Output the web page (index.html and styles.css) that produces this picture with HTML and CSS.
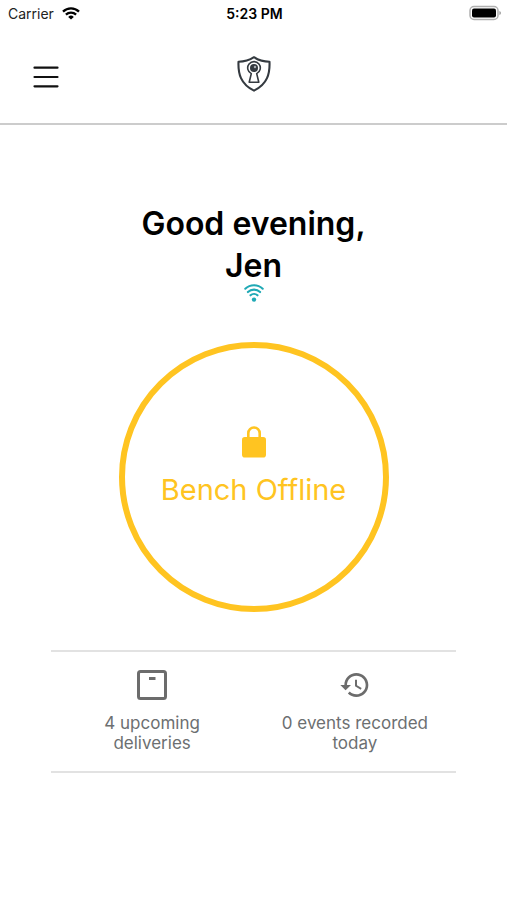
FILE: index.html
```html
<!DOCTYPE html>
<html lang="en">
<head>
<meta charset="utf-8">
<meta name="viewport" content="width=device-width, initial-scale=1">
<title>Home</title>
<link rel="stylesheet" href="styles.css">
</head>
<body>
<div class="status-bar">
  <div class="carrier">
    <span>Carrier</span>
    <svg width="18" height="13" viewBox="0 0 18 13" fill="none" stroke="#000" stroke-width="2.3" aria-hidden="true">
      <path d="M1 4.6a11.5 11.5 0 0 1 16 0"/>
      <path d="M3.900 7.600a7.400 7.400 0 0 1 10.200 0"/>
      <path d="M6.200 9.900a4 4 0 0 1 5.600 0L9 12.600z" fill="#000" stroke="none"/>
    </svg>
  </div>
  <div class="time">5:23 PM</div>
  <div class="battery">
    <svg width="32" height="16" viewBox="0 0 32 16" aria-hidden="true">
      <rect x="1" y="1.500" width="28" height="13" rx="4" fill="#fff" stroke="#b0b0b0" stroke-width="1.500"/>
      <rect x="3" y="3.500" width="24" height="9" rx="2" fill="#000"/>
      <path d="M30.500 6v4q1.300-.6 1.300-2t-1.300-2z" fill="#888"/>
    </svg>
  </div>
</div>

<header class="header">
  <button class="menu" type="button" aria-label="Menu">
    <svg width="26" height="22" viewBox="0 0 26 22" stroke="#111" stroke-width="2.200" stroke-linecap="round" aria-hidden="true">
      <path d="M1.500 1.700h23M1.500 11h23M1.500 20.300h23"/>
    </svg>
  </button>
  <svg class="logo" width="34" height="36" viewBox="0 0 34 36" fill="none" stroke="#343a40" aria-hidden="true">
    <path d="M17 1.200C12.500 4.200 7 5.700 1.500 5.700C1 17.500 3.500 28 17 34.600C30.500 28 33 17.500 32.500 5.700C27 5.700 21.500 4.200 17 1.200z" stroke-width="2.100" stroke-linejoin="round"/>
    <path d="M14.300 17.600A6.300 6.300 0 1 1 19.700 17.600L21.800 26.200H12.200z" stroke-width="1.600" stroke-linejoin="round"/>
    <circle cx="17" cy="12" r="4" fill="#343a40" stroke="none"/>
    <circle cx="18" cy="11" r="1.200" fill="#a9adb2" stroke="none"/>
  </svg>
</header>

<main class="main">
  <h1 class="greeting">Good evening,<br>Jen</h1>
  <svg class="signal" width="20" height="18" viewBox="0 0 20 18" fill="none" stroke="#20a9b5" stroke-width="2.100" stroke-linecap="round" aria-hidden="true">
    <path d="M1.300 4.700a12.500 12.500 0 0 1 17.400 0"/>
    <path d="M3.900 8.100a8.800 8.800 0 0 1 12.200 0"/>
    <path d="M6.500 11.300a5.200 5.200 0 0 1 7 0"/>
    <circle cx="10" cy="15.600" r="2.200" fill="#20a9b5" stroke="none"/>
  </svg>

  <button class="bench" type="button">
    <svg width="24" height="32" viewBox="0 0 24 32" aria-hidden="true">
      <path d="M6.300 13V7.200a5.700 5.700 0 0 1 11.400 0V13" fill="none" stroke="#ffc421" stroke-width="2.600"/>
      <rect x="0" y="11" width="24" height="20.500" rx="2.800" fill="#ffc421"/>
    </svg>
    <span>Bench Offline</span>
  </button>

  <section class="stats">
    <div class="stat">
      <svg width="32" height="32" viewBox="0 0 32 32" aria-hidden="true">
        <rect x="2.500" y="2.500" width="27" height="27" rx="2" fill="none" stroke="#6c6c6c" stroke-width="3"/>
        <rect x="13" y="8" width="6.500" height="3" fill="#6c6c6c"/>
      </svg>
      <p>4 upcoming<br>deliveries</p>
    </div>
    <div class="stat">
      <svg width="32" height="32" viewBox="0 0 24 24" fill="#6c6c6c" aria-hidden="true">
        <path d="M13 3c-4.970 0-9 4.030-9 9H1l3.890 3.890.07.14L9 12H6c0-3.870 3.130-7 7-7s7 3.130 7 7-3.130 7-7 7c-1.930 0-3.680-.79-4.940-2.060l-1.420 1.420C8.270 19.990 10.510 21 13 21c4.970 0 9-4.030 9-9s-4.030-9-9-9zm-1 5v5l4.280 2.540.72-1.210-3.500-2.080V8H12z"/>
      </svg>
      <p>0 events recorded<br>today</p>
    </div>
  </section>
</main>
</body>
</html>
```
FILE: styles.css
```css
* {
  box-sizing: border-box;
}

body {
  margin: 0;
  background: #fff;
  color: #000;
  font-family: Inter, "Liberation Sans", sans-serif;
}

svg {
  display: block;
  flex: none;
}

button {
  padding: 0;
  border: 0;
  background: none;
  font: inherit;
  cursor: pointer;
}

.status-bar {
  display: grid;
  grid-template-columns: 1fr auto 1fr;
  align-items: center;
  height: 26px;
  padding: 0 6px 0 8px;
  font-size: 14px;
}

.carrier {
  display: flex;
  align-items: center;
  gap: 8px;
  color: #222;
}

.time {
  font-weight: 600;
}

.battery {
  justify-self: end;
}

.header {
  display: grid;
  grid-template-columns: 1fr auto 1fr;
  align-items: start;
  height: 99px;
  padding: 30px 33px 0;
  border-bottom: 2px solid #ccc;
}

.menu {
  justify-self: start;
  padding-top: 10px;
}

.main {
  display: flex;
  flex-direction: column;
  align-items: center;
  padding: 78px 10% 0;
}

.greeting {
  margin: 0;
  font-size: 32px;
  font-weight: 600;
  line-height: 42px;
  text-align: center;
}

.signal {
  margin-top: -3px;
}

.bench {
  display: flex;
  flex-direction: column;
  align-items: center;
  gap: 13px;
  width: 270px;
  height: 270px;
  margin: 40px 0 38px;
  padding-top: 78px;
  border: 6px solid #ffc421;
  border-radius: 50%;
  color: #ffc421;
  font-size: 29px;
  font-weight: 400;
  line-height: 38px;
}

.stats {
  display: grid;
  grid-template-columns: 1fr 1fr;
  width: 100%;
  padding: 17px 0 18px;
  border: solid #e2e2e2;
  border-width: 2px 0;
}

.stat {
  display: flex;
  flex-direction: column;
  align-items: center;
  gap: 12px;
  color: #6c6f71;
  font-size: 17px;
  line-height: 20px;
  text-align: center;
}

.stat p {
  margin: 0;
}
```
